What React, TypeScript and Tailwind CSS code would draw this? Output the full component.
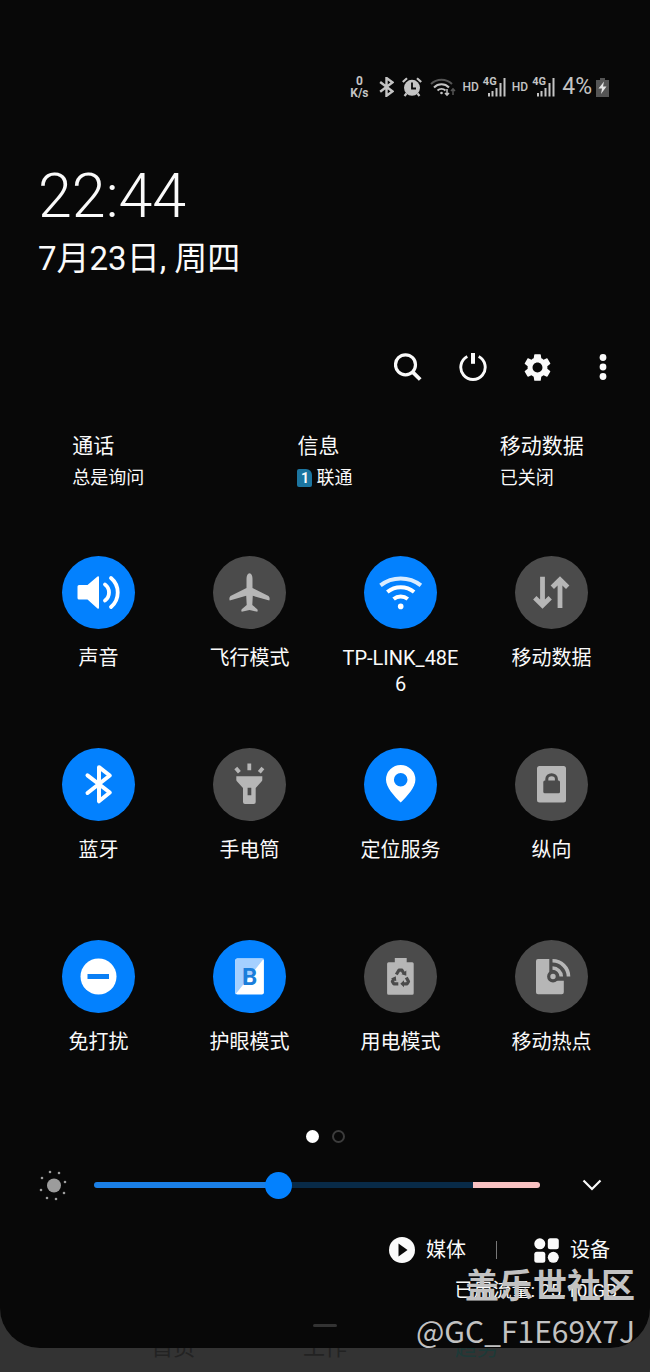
import { useState } from "react";
import type { ReactNode } from "react";
import { MdSettings } from "react-icons/md";

// All tile icons are drawn on the same 73x73 canvas as the round button
const TileIcon = ({ children }: { children: ReactNode }) => (
  <svg viewBox="0 0 73 73" className="h-full w-full" fill="currentColor" aria-hidden="true">
    {children}
  </svg>
);

const SoundIcon = () => (
  <TileIcon>
    <path d="M17 29h8.500l10-8.500q1.500-.8 1.500 1v30q0 1.800-1.500 1L25.500 43.500H17q-1.500 0-1.500-1.500V30.500q0-1.500 1.500-1.500z" />
    <path d="M43 28.500a10 10 0 0 1 0 16M49 22a19 19 0 0 1 0 29" fill="none" stroke="currentColor" strokeWidth="3.800" strokeLinecap="round" />
  </TileIcon>
);

const PlaneIcon = () => (
  <TileIcon>
    <path d="M36.500 17.300c2 0 3 2.500 3 5.500V32L55.500 40q1.800 2 .8 4.500L39.800 39.800 39.300 49l5 4.200q.8 1.500 0 2.500L36.500 54l-7.800 1.700q-.8-1 0-2.500l5-4.200-.5-9.200-16.500 4.700q-1-2.500.8-4.500L33.500 32v-9.200c0-3 1-5.500 3-5.500z" />
  </TileIcon>
);

const WifiIcon = () => (
  <TileIcon>
    <g fill="none" stroke="currentColor" strokeWidth="4">
      <path d="M16.500 29.300a33 33 0 0 1 40.400 0" opacity="0.850" />
      <path d="M23.300 36a21.500 21.500 0 0 1 26.800 0" />
      <path d="M29.600 43a11.500 11.500 0 0 1 14.200 0" />
    </g>
    <circle cx="36.700" cy="50.400" r="2.800" />
  </TileIcon>
);

const DataIcon = () => (
  <TileIcon>
    <path d="M27.500 20.700V49M19.800 41.800l7.700 7.500 7.700-7.500M45 52V24M37.300 31.200l7.700-7.500 7.700 7.500" fill="none" stroke="currentColor" strokeWidth="4.800" />
  </TileIcon>
);

const BluetoothIcon = () => (
  <TileIcon>
    <path d="M25.500 27.300 47.800 44.500 37 53.300V19.200l10.800 8.300L25.500 45" fill="none" stroke="currentColor" strokeWidth="4" strokeLinecap="round" strokeLinejoin="round" />
  </TileIcon>
);

const TorchIcon = () => (
  <TileIcon>
    <path fillRule="evenodd" d="M23.300 28.300h26v3.500q0 1-.8 1.800l-5.800 6.400v14q0 2-2 2h-8.700q-2 0-2-2V40l-5.900-6.400q-.8-.8-.8-1.800zM34.600 39.800v7.500h3.700v-7.500z" />
    <path d="M36.300 15.500v6.800M22.800 20l3.600 4.300M49.900 20l-3.600 4.300" stroke="currentColor" strokeWidth="3.800" />
  </TileIcon>
);

const PinIcon = () => (
  <TileIcon>
    <path fillRule="evenodd" d="M36.700 17a14.700 14.700 0 0 1 14.700 14.700c0 7.500-8 16-14.700 22.800-6.700-6.800-14.700-15.300-14.700-22.800A14.700 14.700 0 0 1 36.700 17zm0 8a6.800 6.800 0 1 0 0 13.600 6.800 6.800 0 0 0 0-13.600z" />
  </TileIcon>
);

const PortraitIcon = () => (
  <TileIcon>
    <rect x="22" y="18" width="29" height="36.500" rx="2.500" />
    <rect x="28.300" y="32.500" width="16.700" height="12.800" rx="1.500" className="fill-[#4b4b4b]" />
    <path d="M31.800 33v-2a4.800 4.300 0 0 1 9.600 0v2" fill="none" className="stroke-[#4b4b4b]" strokeWidth="3" />
  </TileIcon>
);

const DndIcon = () => (
  <TileIcon>
    <circle cx="36.500" cy="36.500" r="18" />
    <rect x="25.500" y="34" width="21.500" height="5" className="fill-[#0a7ff5]" />
  </TileIcon>
);

const EyeIcon = () => (
  <TileIcon>
    <rect x="22.300" y="18.600" width="28.600" height="36" rx="2" />
    <path d="M24.300 18.600h26.600L22.300 54.600v-34q0-2 2-2z" className="fill-[#a5d0ff]" />
    <text x="36.600" y="44.800" textAnchor="middle" className="fill-[#1a7edb] font-['Roboto',sans-serif] text-[24px] font-bold">B</text>
  </TileIcon>
);

const PowerModeIcon = () => (
  <TileIcon>
    <path d="M30.800 18h11.900v4.300h5.500q1.500 0 1.500 1.500v29.400q0 1.500-1.500 1.500H24.600q-1.500 0-1.500-1.500V23.800q0-1.500 1.500-1.500h6.200z" />
    <path d="M32.300 34.500l2.700-4.300h3l1.800 3M42.300 37.500l2.200 4-1.300 2.300h-3.700M34.300 43.800h-4.600l-1.300-2.300 1.500-2.700" fill="none" className="stroke-[#4b4b4b]" strokeWidth="3.200" strokeLinejoin="round" />
    <path d="M42.300 30.500v5.200l-4.800-1.500zM40 40.300v7l-3.700-3.500zM27 38.500l4.800-2.200.5 5z" className="fill-[#4b4b4b]" />
  </TileIcon>
);

const HotspotIcon = () => (
  <TileIcon>
    <path d="M23 19h11.300v21.700h14.500v11.500q0 2-2 2H23q-2 0-2-2V21q0-2 2-2z" />
    <path d="M37.500 20.800a16 16 0 0 1 16 15.700M37.500 28a9 9 0 0 1 8.800 8.500" fill="none" stroke="currentColor" strokeWidth="3.600" />
    <circle cx="38" cy="36.500" r="4.300" className="stroke-[#4b4b4b]" strokeWidth="3.200" />
  </TileIcon>
);

const tiles = [
  { label: "声音", on: true, icon: <SoundIcon /> },
  { label: "飞行模式", on: false, icon: <PlaneIcon /> },
  { label: "TP-LINK_48E6", on: true, icon: <WifiIcon /> },
  { label: "移动数据", on: false, icon: <DataIcon /> },
  { label: "蓝牙", on: true, icon: <BluetoothIcon /> },
  { label: "手电筒", on: false, icon: <TorchIcon /> },
  { label: "定位服务", on: true, icon: <PinIcon /> },
  { label: "纵向", on: false, icon: <PortraitIcon /> },
  { label: "免打扰", on: true, icon: <DndIcon /> },
  { label: "护眼模式", on: true, icon: <EyeIcon /> },
  { label: "用电模式", on: false, icon: <PowerModeIcon /> },
  { label: "移动热点", on: false, icon: <HotspotIcon /> },
];

const Tile = ({ label, on, icon }: { label: string; on: boolean; icon: ReactNode }) => (
  <button type="button" aria-pressed={on} className="flex flex-col items-center justify-start">
    <span className={`block size-[73px] rounded-full ${on ? "bg-[#0381fe] text-white" : "bg-[#4b4b4b] text-[#b6b6b6]"}`}>
      {icon}
    </span>
    <span className="mt-4 w-[126px] text-center text-[20px] leading-[26px] break-all">{label}</span>
  </button>
);

const Signal = () => (
  <span className="relative block h-5 w-[23px]">
    <svg viewBox="0 0 23 20" className="h-5 w-[23px]" stroke="currentColor" strokeWidth="2" aria-hidden="true">
      <path d="M6 16v3.500M9.500 14v5.500M13.500 11v8.500M17.500 6v13.500M21.500 1v18.500" />
    </svg>
    <span className="absolute top-0 left-0 text-[11px] leading-[10px] font-bold">4G</span>
  </span>
);

const StatusBar = () => (
  <div className="flex h-6 items-center justify-end pr-[41px] text-[#c4c4c4]">
    <span className="text-center text-[12px] leading-[12px] font-bold">
      0<br />K/s
    </span>
    <svg viewBox="22 16 30 41" className="ml-[10px] h-5 w-[15px]" aria-hidden="true">
      <path d="M24 26.300 49 45.500 37 54.500V18l12 9L24 46.300" fill="none" stroke="currentColor" strokeWidth="5" />
    </svg>
    <svg viewBox="0 0 20 20" className="ml-2 size-5" aria-hidden="true">
      <circle cx="10" cy="10.800" r="8" fill="currentColor" />
      <path d="M.8 5 5 1.200M19.200 5 15 1.200M4.500 16.500l-2 2.500M15.500 16.500l2 2.500" stroke="currentColor" strokeWidth="2.200" />
      <path d="M10 5.500v6h4" fill="none" className="stroke-[#080808]" strokeWidth="1.800" />
    </svg>
    <svg viewBox="0 0 26 20" className="ml-2 h-5 w-[26px]" fill="none" stroke="currentColor" strokeWidth="2" aria-hidden="true">
      <path d="M1 7a15 15 0 0 1 21 0" className="stroke-[#555]" />
      <path d="M4 10.500a10.500 10.500 0 0 1 15 0M7.500 13.500a6 6 0 0 1 8 0" />
      <circle cx="11.500" cy="16" r="1.300" fill="currentColor" stroke="none" />
      <path d="M17 12v6M15 16l2 2.200 2-2.200" strokeWidth="1.500" />
      <path d="M23 18v-6M21 14l2-2.200 2 2.200" strokeWidth="1.500" className="stroke-[#555]" />
    </svg>
    <span className="ml-[7px] text-[12px] font-medium">HD</span>
    <span className="ml-1"><Signal /></span>
    <span className="ml-[6px] text-[12px] font-medium">HD</span>
    <span className="ml-1"><Signal /></span>
    <span className="ml-[7px] text-[23px] leading-6">4%</span>
    <svg viewBox="0 0 13 19" className="ml-1 h-[19px] w-[13px]" aria-hidden="true">
      <path d="M4 0h5v2h4v17H0V2h4z" className="fill-[#555]" />
      <path d="M8 3.500 2.500 10.500H6L5 16l5.500-7.500H7z" fill="#e4e4e4" />
    </svg>
  </div>
);

const Toolbar = () => (
  <div className="mt-16 flex justify-end pr-[15px]">
    <button type="button" aria-label="搜索" className="flex h-12 w-[65px] items-center justify-center">
      <svg viewBox="0 0 28 28" className="size-7" fill="none" stroke="currentColor">
        <circle cx="11.500" cy="11.800" r="10" strokeWidth="3.200" />
        <path d="m18.500 18.800 7.700 7.700" strokeWidth="3.800" />
      </svg>
    </button>
    <button type="button" aria-label="电源" className="flex h-12 w-[65px] items-center justify-center">
      <svg viewBox="0 0 28 28" className="size-7" fill="none" stroke="currentColor">
        <path d="M8.300 3.500a12.200 12.200 0 1 0 11.400 0" strokeWidth="2.900" />
        <path d="M14 0v10.800" strokeWidth="4" />
      </svg>
    </button>
    <button type="button" aria-label="设置" className="flex h-12 w-[65px] items-center justify-center">
      <MdSettings size={33} />
    </button>
    <button type="button" aria-label="更多" className="flex h-12 w-[65px] items-center justify-center">
      <svg viewBox="0 0 8 28" className="h-7 w-2" fill="currentColor">
        <circle cx="4" cy="4.500" r="3.400" />
        <circle cx="4" cy="14" r="3.400" />
        <circle cx="4" cy="23.500" r="3.400" />
      </svg>
    </button>
  </div>
);

const sims = [
  { title: "通话", value: "总是询问" },
  { title: "信息", value: "联通", slot: 1 },
  { title: "移动数据", value: "已关闭" },
];

const SimInfo = () => (
  <div className="mt-[41px] grid grid-cols-3">
    {sims.map((sim) => (
      <div key={sim.title} className="flex justify-center">
        <div>
          <p className="text-[21px] leading-7">{sim.title}</p>
          <p className="mt-[6px] flex items-center gap-1 text-[18px] leading-6">
            {sim.slot && (
              <span className="flex h-[18px] w-[15px] items-center justify-center rounded-xs rounded-tr-md bg-[#1c75a0] text-[14px] font-bold">
                {sim.slot}
              </span>
            )}
            {sim.value}
          </p>
        </div>
      </div>
    ))}
  </div>
);

const sunRays = [
  [11, 2], [20, 3], [26, 12], [25, 23], [17, 29], [8, 28], [2, 20], [3, 8],
];

const Brightness = () => {
  const [level, setLevel] = useState(104);
  const pct = (level / 255) * 100;
  return (
    <div className="mt-[22px] flex h-10 items-center pr-12 pl-[39px]">
      <svg viewBox="0 0 30 31" className="h-[31px] w-[30px] text-[#9c9c9c]" fill="currentColor" aria-hidden="true">
        <circle cx="15" cy="15.500" r="7" />
        {sunRays.map(([x, y]) => (
          <circle key={`${x}-${y}`} cx={x} cy={y} r="1.300" />
        ))}
      </svg>
      <input
        type="range"
        min={0}
        max={255}
        value={level}
        onChange={(e) => setLevel(Number(e.target.value))}
        aria-label="亮度"
        className="mr-[42px] ml-[25px] h-[6px] min-w-0 flex-1 appearance-none rounded-full [&::-webkit-slider-thumb]:size-[27px] [&::-webkit-slider-thumb]:appearance-none [&::-webkit-slider-thumb]:rounded-full [&::-webkit-slider-thumb]:bg-[#0381fe]"
        style={{
          background: `linear-gradient(to right, #1a7fe6 ${pct}%, #082a47 ${pct}%, #082a47 85%, #f9c2c2 85%)`,
        }}
      />
      <button type="button" aria-label="展开" className="flex h-10 w-5 items-center justify-center">
        <svg viewBox="0 0 20 12" className="h-3 w-5" fill="none" stroke="currentColor" strokeWidth="2.200">
          <path d="m1.500 1.500 8.500 8.500 8.500-8.500" />
        </svg>
      </button>
    </div>
  );
};

const Footer = () => (
  <>
    <div className="mt-[30px] flex h-[30px] items-center justify-end pr-10 text-[20px]">
      <button type="button" className="flex items-center gap-[11px]">
        <svg viewBox="0 0 26 26" className="size-[26px]" aria-hidden="true">
          <circle cx="13" cy="13" r="13" fill="currentColor" />
          <path d="M9.500 6.500v13l9-6.500z" className="fill-[#080808]" />
        </svg>
        媒体
      </button>
      <span className="mr-[37px] ml-[30px] h-[18px] w-px bg-[#777]" />
      <button type="button" className="flex items-center gap-[11px]">
        <svg viewBox="0 0 25 25" className="size-[25px]" fill="currentColor" aria-hidden="true">
          <circle cx="5.800" cy="5.800" r="5.500" />
          <rect x="13.800" y=".3" width="11" height="11" rx="2.500" />
          <rect x=".3" y="13.800" width="11" height="11" rx="2.500" />
          <circle cx="19.300" cy="19.300" r="5.500" />
        </svg>
        设备
      </button>
    </div>
    <p className="mt-[14px] pr-[33px] text-right text-[19px] leading-6">已用流量: 25.10 GB</p>
    <div className="mx-auto mt-[21px] h-[3px] w-6 rounded-full bg-[#333]" />
  </>
);

export default function App() {
  return (
    <div className="relative min-h-screen bg-[#333] font-['Roboto','Noto_Sans_CJK_SC',sans-serif] text-[#fafafa]">
      <main className="relative z-10 rounded-b-[40px] bg-[#080808] pt-[75px] pb-[21px]">
        <StatusBar />
        <header className="mt-[65px] pl-[38px]">
          <h1 className="text-[61px] leading-[64px] font-light">22:44</h1>
          <p className="mt-[11px] text-[33px] leading-10">7月23日, 周四</p>
        </header>
        <Toolbar />
        <SimInfo />
        <section className="mt-[66px] grid auto-rows-fr grid-cols-4 gap-y-[51px] px-[23px]">
          {tiles.map((tile) => (
            <Tile key={tile.label} {...tile} />
          ))}
        </section>
        <div className="mt-[49px] flex justify-center gap-[13px]">
          <span className="size-[13px] rounded-full bg-white" />
          <span className="size-[13px] rounded-full border-2 border-[#3c3c3c]" />
        </div>
        <Brightness />
        <Footer />
      </main>

      {/* tab bar of the app behind the panel */}
      <nav className="-mt-3 grid h-9 grid-cols-3 px-[15%] text-center text-[22px] leading-6 text-[#222]">
        <span>首页</span>
        <span>工作</span>
        <span className="text-[#1d3a38]">趋势</span>
      </nav>

      {/* watermark */}
      <div className="absolute right-[15px] bottom-5 z-20 text-right text-[#c2c2c2]">
        <p className="text-[34px] leading-[44px] font-bold">盖乐世社区</p>
        <p className="font-['Noto_Sans_CJK_SC',sans-serif] text-[30px] leading-[44px]">@GC_F1E69X7J</p>
      </div>
    </div>
  );
}
